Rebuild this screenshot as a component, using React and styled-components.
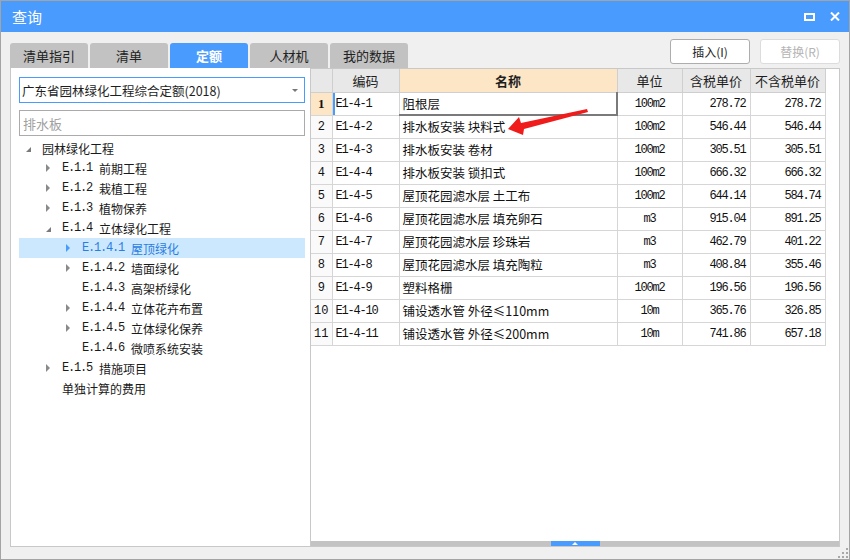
import React from 'react';
import styled, { createGlobalStyle } from 'styled-components';

const Global = createGlobalStyle`
  html, body { margin: 0; padding: 0; background: #fff; }
  body { font-family: "Noto Sans CJK SC", "Noto Sans", sans-serif; }
  * { box-sizing: border-box; }
`;

const BLUE = '#4a9bfe';

const Window = styled.div`
  position: relative;
  width: 850px;
  height: 560px;
  border: 1px solid #a4a4a4;
  background: #f0f0f0;
  display: flex;
  flex-direction: column;
`;

const TitleBar = styled.div`
  height: 31px;
  background: ${BLUE};
  color: #fff;
  display: flex;
  align-items: center;
  justify-content: space-between;
  padding: 0 9px 0 11px;
  font-size: 15px;
`;

const WinButtons = styled.div`
  display: flex;
  align-items: center;
  gap: 15px;
`;

const Body = styled.div`
  flex: 1;
  display: flex;
  flex-direction: column;
  padding: 0 9px 12px 9px;
`;

const TopRow = styled.div`
  height: 36px;
  display: flex;
  justify-content: space-between;
`;

const Tabs = styled.div`
  display: flex;
  gap: 2px;
  align-self: flex-end;
`;

const Tab = styled.div`
  width: 78px;
  height: 25px;
  border-radius: 3px 3px 0 0;
  background: ${p => (p.$active ? BLUE : '#c2c2c2')};
  color: ${p => (p.$active ? '#fff' : '#222')};
  font-weight: ${p => (p.$active ? 700 : 400)};
  font-size: 13px;
  display: flex;
  align-items: center;
  justify-content: center;
`;

const Buttons = styled.div`
  display: flex;
  gap: 10px;
  margin-top: 7px;
`;

const Button = styled.div`
  width: 80px;
  height: 25px;
  background: #fff;
  border: 1px solid ${p => (p.$disabled ? '#dcdcdc' : '#adadad')};
  border-radius: 3px;
  color: ${p => (p.$disabled ? '#b4b4b4' : '#1e1e1e')};
  font-size: 12px;
  display: flex;
  align-items: center;
  justify-content: center;
`;

const Content = styled.div`
  flex: 1;
  display: flex;
`;

const LeftPanel = styled.div`
  width: 301px;
  background: #fff;
  border: 1px solid #c8c8c8;
  border-top: none;
  padding: 9px 5px 0 8px;
  display: flex;
  flex-direction: column;
`;

const Select = styled.div`
  height: 26px;
  border: 1px solid ${BLUE};
  display: flex;
  align-items: center;
  justify-content: space-between;
  padding: 0 6px 0 2px;
  font-size: 12.5px;
  color: #1e1e1e;
`;

const Caret = styled.span`
  width: 0;
  height: 0;
  border-left: 3px solid transparent;
  border-right: 3px solid transparent;
  border-top: 3px solid #777;
`;

const Search = styled.div`
  margin-top: 7px;
  height: 26px;
  border: 1px solid #ababab;
  display: flex;
  align-items: center;
  padding-left: 3px;
  font-size: 13px;
  color: #a0a0a0;
`;

const Tree = styled.div`
  margin-top: 2px;
  display: flex;
  flex-direction: column;
`;

const TreeRow = styled.div`
  height: 20px;
  display: flex;
  align-items: center;
  padding-left: ${p => 7 + p.$level * 20}px;
  background: ${p => (p.$selected ? '#cce8ff' : 'transparent')};
  color: ${p => (p.$selected ? '#2a7de1' : '#1a1a1a')};
  font-size: 12px;
  white-space: nowrap;
`;

const Toggle = styled.span`
  width: 16px;
  height: 20px;
  display: flex;
  align-items: center;
  flex-shrink: 0;
`;

const ArrowRight = styled.span`
  width: 0;
  height: 0;
  border-top: 4px solid transparent;
  border-bottom: 4px solid transparent;
  border-left: 4px solid ${p => (p.$selected ? '#4a9bfe' : '#8a8a8a')};
`;

const ArrowOpen = styled.span`
  width: 0;
  height: 0;
  margin-top: 2px;
  border-left: 5px solid transparent;
  border-bottom: 5px solid #7a7a7a;
`;

const Mono = styled.span`
  font-family: "Liberation Mono", monospace;
  font-size: 12px;
  letter-spacing: -1.2px;
`;

const Label = styled.span`
  display: flex;
  align-items: center;
  gap: 7px;
`;

const RightPanel = styled.div`
  flex: 1;
  position: relative;
  background: #fff;
  border: 1px solid #c8c8c8;
  border-left: none;
  display: flex;
  flex-direction: column;
`;

const Grid = styled.table`
  border-collapse: collapse;
  table-layout: fixed;
  width: 514px;
`;

const Th = styled.th`
  height: 23px;
  padding: 0;
  border: 1px solid #cfcfcf;
  border-top: none;
  background: ${p => (p.$accent ? '#fde6c6' : '#e8e8e8')};
  font-weight: ${p => (p.$accent ? 700 : 400)};
  font-size: 13px;
  color: #1e1e1e;
  text-align: center;
  &:first-child { border-left: none; }
`;

const Td = styled.td`
  height: 23px;
  padding: 0 3px;
  border: 1px solid #d6d6d6;
  font-size: 12.5px;
  color: #111;
  text-align: ${p => p.$align || 'left'};
  white-space: nowrap;
  overflow: hidden;
`;

const NumTd = styled(Td)`
  border-left: none;
  padding: 0;
  text-align: center;
  background: ${p => (p.$active ? '#fde6c6' : '#fafafa')};
  font-family: ${p => (p.$active ? '"Liberation Serif", serif' : '"Liberation Mono", monospace')};
  font-weight: ${p => (p.$active ? 700 : 400)};
  font-size: ${p => (p.$active ? '13px' : '12px')};
`;

const CodeTd = styled(Td)`
  font-family: "Liberation Mono", monospace;
  font-size: 12px;
  letter-spacing: -1.2px;
  box-shadow: ${p => (p.$active ? `inset 2px 0 0 ${BLUE}` : 'none')};
`;

const NameTd = styled(Td)`
  ${p =>
    p.$editing &&
    `border-top: 1px solid #9a9a9a; border-left: 1px solid #9a9a9a; border-right: 2px solid #7a7a7a; border-bottom: 2px solid #7a7a7a;`}
`;

const MonoTd = styled(Td)`
  font-family: "Liberation Mono", monospace;
  font-size: 12px;
  letter-spacing: -1.2px;
  padding-right: ${p => (p.$align === 'right' ? '4px' : '3px')};
`;

const HScroll = styled.div`
  margin-top: auto;
  height: 5px;
  background: #c3c3c3;
  display: flex;
  justify-content: center;
`;

const Thumb = styled.div`
  width: 49px;
  height: 5px;
  background: ${BLUE};
  display: flex;
  justify-content: center;
  align-items: flex-end;
  padding-bottom: 1px;
`;

const ThumbArrow = styled.span`
  width: 0;
  height: 0;
  border-left: 3px solid transparent;
  border-right: 3px solid transparent;
  border-bottom: 3px solid #fff;
`;

const Pointer = styled.svg`
  position: absolute;
  left: 190px;
  top: 35px;
  pointer-events: none;
`;

const Grip = styled.svg`
  position: absolute;
  right: 1px;
  bottom: 1px;
`;

const tabs = ['清单指引', '清单', '定额', '人材机', '我的数据'];

const tree = [
  { level: 0, code: '', label: '园林绿化工程', t: 'open' },
  { level: 1, code: 'E.1.1', label: '前期工程', t: 'closed' },
  { level: 1, code: 'E.1.2', label: '栽植工程', t: 'closed' },
  { level: 1, code: 'E.1.3', label: '植物保养', t: 'closed' },
  { level: 1, code: 'E.1.4', label: '立体绿化工程', t: 'open' },
  { level: 2, code: 'E.1.4.1', label: '屋顶绿化', t: 'closed', selected: true },
  { level: 2, code: 'E.1.4.2', label: '墙面绿化', t: 'closed' },
  { level: 2, code: 'E.1.4.3', label: '高架桥绿化', t: null },
  { level: 2, code: 'E.1.4.4', label: '立体花卉布置', t: 'closed' },
  { level: 2, code: 'E.1.4.5', label: '立体绿化保养', t: 'closed' },
  { level: 2, code: 'E.1.4.6', label: '微喷系统安装', t: null },
  { level: 1, code: 'E.1.5', label: '措施项目', t: 'closed' },
  { level: 1, code: '', label: '单独计算的费用', t: null },
];

const rows = [
  ['E1-4-1', '阻根层', '100m2', '278.72', '278.72'],
  ['E1-4-2', '排水板安装 块料式', '100m2', '546.44', '546.44'],
  ['E1-4-3', '排水板安装 卷材', '100m2', '305.51', '305.51'],
  ['E1-4-4', '排水板安装 锁扣式', '100m2', '666.32', '666.32'],
  ['E1-4-5', '屋顶花园滤水层 土工布', '100m2', '644.14', '584.74'],
  ['E1-4-6', '屋顶花园滤水层 填充卵石', 'm3', '915.04', '891.25'],
  ['E1-4-7', '屋顶花园滤水层 珍珠岩', 'm3', '462.79', '401.22'],
  ['E1-4-8', '屋顶花园滤水层 填充陶粒', 'm3', '408.84', '355.46'],
  ['E1-4-9', '塑料格栅', '100m2', '196.56', '196.56'],
  ['E1-4-10', '铺设透水管 外径≤110mm', '10m', '365.76', '326.85'],
  ['E1-4-11', '铺设透水管 外径≤200mm', '10m', '741.86', '657.18'],
];

export default function App() {
  return (
    <>
      <Global />
      <Window>
        <TitleBar>
          <span>查询</span>
          <WinButtons>
            <svg width="11" height="8" viewBox="0 0 11 8">
              <rect x="1" y="1" width="9" height="6" fill="none" stroke="#fff" strokeWidth="2" />
            </svg>
            <svg width="10" height="9" viewBox="0 0 10 9">
              <path d="M1 0.5 L9 8.5 M9 0.5 L1 8.5" stroke="#fff" strokeWidth="2" />
            </svg>
          </WinButtons>
        </TitleBar>
        <Body>
          <TopRow>
            <Tabs>
              {tabs.map(t => (
                <Tab key={t} $active={t === '定额'}>{t}</Tab>
              ))}
            </Tabs>
            <Buttons>
              <Button>插入(I)</Button>
              <Button $disabled>替换(R)</Button>
            </Buttons>
          </TopRow>
          <Content>
            <LeftPanel>
              <Select>
                <span>广东省园林绿化工程综合定额(2018)</span>
                <Caret />
              </Select>
              <Search>排水板</Search>
              <Tree>
                {tree.map((n, i) => (
                  <TreeRow key={i} $level={n.level} $selected={n.selected}>
                    <Toggle>
                      {n.t === 'open' && <ArrowOpen />}
                      {n.t === 'closed' && <ArrowRight $selected={n.selected} />}
                    </Toggle>
                    <Label>
                      {n.code && <Mono>{n.code}</Mono>}
                      <span>{n.label}</span>
                    </Label>
                  </TreeRow>
                ))}
              </Tree>
            </LeftPanel>
            <RightPanel>
              <Grid>
                <colgroup>
                  <col style={{ width: 21 }} />
                  <col style={{ width: 67 }} />
                  <col style={{ width: 218 }} />
                  <col style={{ width: 65 }} />
                  <col style={{ width: 68 }} />
                  <col style={{ width: 75 }} />
                </colgroup>
                <thead>
                  <tr>
                    <Th />
                    <Th>编码</Th>
                    <Th $accent>名称</Th>
                    <Th>单位</Th>
                    <Th>含税单价</Th>
                    <Th>不含税单价</Th>
                  </tr>
                </thead>
                <tbody>
                  {rows.map((r, i) => (
                    <tr key={r[0]}>
                      <NumTd $active={i === 0}>{i + 1}</NumTd>
                      <CodeTd $active={i === 0}>{r[0]}</CodeTd>
                      <NameTd $editing={i === 0}>{r[1]}</NameTd>
                      <MonoTd $align="center">{r[2]}</MonoTd>
                      <MonoTd $align="right">{r[3]}</MonoTd>
                      <MonoTd $align="right">{r[4]}</MonoTd>
                    </tr>
                  ))}
                </tbody>
              </Grid>
              <HScroll>
                <Thumb>
                  <ThumbArrow />
                </Thumb>
              </HScroll>
              <Pointer width="95" height="35" viewBox="0 0 95 35">
                <polygon
                  points="7,25 18,13 20,19 86,5 87,8 23,25 22,31"
                  fill="#f01c1c"
                />
              </Pointer>
            </RightPanel>
          </Content>
        </Body>
        <Grip width="10" height="10" viewBox="0 0 10 10">
          <g fill="#a8a8a8">
            <rect x="8" y="0" width="2" height="2" />
            <rect x="4" y="4" width="2" height="2" />
            <rect x="8" y="4" width="2" height="2" />
            <rect x="0" y="8" width="2" height="2" />
            <rect x="4" y="8" width="2" height="2" />
            <rect x="8" y="8" width="2" height="2" />
          </g>
        </Grip>
      </Window>
    </>
  );
}
